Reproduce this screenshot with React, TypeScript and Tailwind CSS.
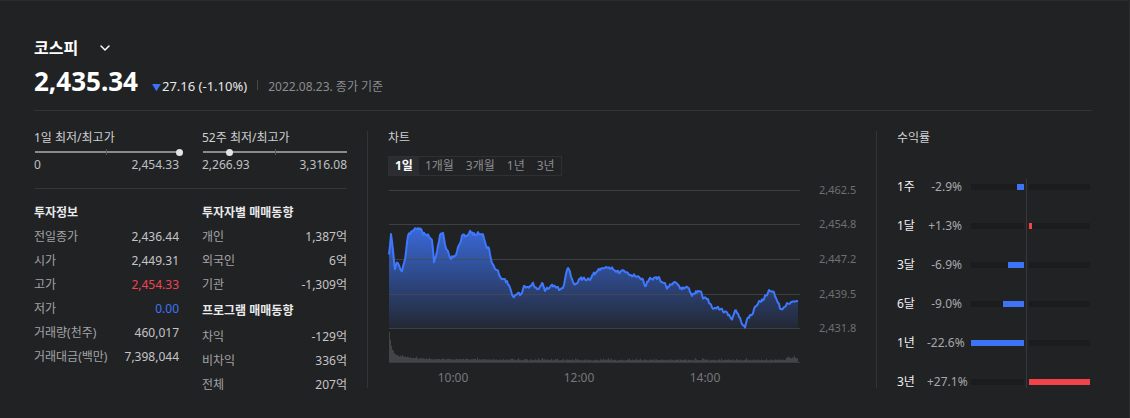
import React from "react";
import { ChevronDown } from "lucide-react";

// page coords traced from the intraday line
const KEYS: [number, number][] = [
  [389, 252], [391, 232], [393, 250], [395, 268], [397, 260], [402, 268], [405, 258], [408, 233], [413, 230],
  [415, 226], [419, 226], [423, 232], [428, 232], [432, 237], [434, 259], [437, 248], [440, 233], [443, 232],
  [445, 243], [450, 255], [455, 255], [458, 247], [462, 235], [467, 233], [470, 230], [475, 232], [478, 231],
  [483, 232], [486, 243], [489, 247], [492, 262], [497, 270], [502, 275], [507, 280], [510, 287], [514, 295],
  [517, 293], [522, 293], [524, 283], [528, 285], [533, 282], [537, 288], [542, 280], [545, 288], [552, 285],
  [557, 285], [560, 288], [564, 283], [567, 270], [569, 267], [572, 278], [574, 282], [578, 278], [583, 277],
  [590, 276], [593, 273], [598, 270], [603, 267], [608, 265], [612, 265], [617, 270], [623, 271], [630, 272],
  [637, 273], [642, 278], [645, 282], [650, 277], [655, 276], [658, 277], [663, 280], [667, 285], [672, 283],
  [677, 283], [682, 287], [687, 285], [692, 293], [697, 290], [700, 288], [703, 295], [707, 297], [712, 305],
  [717, 307], [722, 308], [727, 312], [732, 315], [735, 308], [738, 313], [742, 322], [745, 326], [748, 315],
  [753, 310], [758, 300], [763, 298], [768, 290], [773, 287], [777, 298], [780, 306], [785, 303], [790, 300],
  [798, 299],
];

const OX = 388;
const OY = 180;

function makeRnd(s: number) {
  let seed = s;
  return () => {
    seed = (seed * 9301 + 49297) % 233280;
    return seed / 233280;
  };
}

function buildLine() {
  const rnd = makeRnd(11);
  const pts: [number, number][] = [];
  let i = 0;
  let drift = 0;
  for (let x = 389; x <= 798; x++) {
    while (i < KEYS.length - 2 && KEYS[i + 1][0] < x) i++;
    const [x0, y0] = KEYS[i];
    const [x1, y1] = KEYS[i + 1];
    const t = Math.min(1, Math.max(0, (x - x0) / (x1 - x0)));
    const amp = x > 790 ? 0 : 3.6;
    drift = drift * 0.5 + (rnd() - 0.5) * amp;
    const y = y0 + (y1 - y0) * t + (x > 790 ? 0 : drift);
    pts.push([x - OX, Math.min(146, y - OY)]);
  }
  return pts;
}

function buildVolume() {
  const rnd = makeRnd(5);
  const bars: number[] = [];
  for (let x = 389; x <= 797; x++) {
    const dx = x - 389;
    let h = 1.4 + rnd() * 1.3 + 22 * Math.exp(-dx / 2) + 5 * Math.exp(-dx / 12) + 2 * Math.exp(-dx / 60);
    if (rnd() > 0.93) h += 1.5;
    if (x > 785) h += 2;
    bars.push(Math.min(30, h));
  }
  return bars;
}

const LINE = buildLine();
const VOLUME = buildVolume();
const LINE_D = LINE.map((p, i) => `${i ? "L" : "M"}${p[0]},${p[1].toFixed(1)}`).join(" ");
const AREA_D = `${LINE_D} L${LINE[LINE.length - 1][0]},146 L${LINE[0][0]},146 Z`;

const GRID = [
  { y: 8, label: "2,462.5" },
  { y: 42, label: "2,454.8" },
  { y: 77, label: "2,447.2" },
  { y: 112, label: "2,439.5" },
  { y: 146, label: "2,431.8" },
];

const INFO = [
  { label: "전일종가", value: "2,436.44" },
  { label: "시가", value: "2,449.31" },
  { label: "고가", value: "2,454.33", color: "text-[#f2444f]" },
  { label: "저가", value: "0.00", color: "text-[#3d74f5]" },
  { label: "거래량(천주)", value: "460,017" },
  { label: "거래대금(백만)", value: "7,398,044" },
];

const INVESTORS = [
  { label: "개인", value: "1,387억" },
  { label: "외국인", value: "6억" },
  { label: "기관", value: "-1,309억" },
];

const PROGRAM = [
  { label: "차익", value: "-129억" },
  { label: "비차익", value: "336억" },
  { label: "전체", value: "207억" },
];

const RETURNS = [
  { label: "1주", value: "-2.9%", pct: -2.9 },
  { label: "1달", value: "+1.3%", pct: 1.3 },
  { label: "3달", value: "-6.9%", pct: -6.9 },
  { label: "6달", value: "-9.0%", pct: -9.0 },
  { label: "1년", value: "-22.6%", pct: -22.6 },
  { label: "3년", value: "+27.1%", pct: 27.1 },
];

const TABS = ["1일", "1개월", "3개월", "1년", "3년"];

function Row({ label, value, color }: { label: string; value: string; color?: string }) {
  return (
    <div className="flex h-[24px] items-center justify-between">
      <span className="text-[#a2a3a6]">{label}</span>
      <span className={color ?? "text-[#c4c5c7]"}>{value}</span>
    </div>
  );
}

function RangeBar({ label, low, high, dot, tick }: { label: string; low: string; high: string; dot: number; tick: number }) {
  return (
    <div>
      <div className="leading-[14px] text-[#cfd0d2]">{label}</div>
      <div className="relative mt-[3px] h-[8px]">
        <div className="absolute left-[1px] right-0 top-[3px] h-[2px] bg-[#8a8b8d]" />
        <div className="absolute top-[1px] h-[6px] w-[1px] bg-[#55565a]" style={{ left: tick }} />
        <div className="absolute top-[1px] h-[7px] w-[7px] rounded-full bg-[#e4e4e4]" style={{ left: dot - 3 }} />
      </div>
      <div className="mt-[2px] flex justify-between leading-[14px] text-[#bfc0c2]">
        <span>{low}</span>
        <span>{high}</span>
      </div>
    </div>
  );
}

function PriceChart() {
  return (
    <svg width="468" height="205" className="mt-[6px] block">
      <defs>
        <linearGradient id="fill" gradientUnits="userSpaceOnUse" x1="0" y1="46" x2="0" y2="146">
          <stop offset="0" stopColor="#3b6fe8" stopOpacity="0.92" />
          <stop offset="1" stopColor="#3b6fe8" stopOpacity="0.08" />
        </linearGradient>
      </defs>
      <path d={AREA_D} fill="url(#fill)" />
      {GRID.map((g) => (
        <g key={g.label}>
          <line x1="1" x2="412" y1={g.y + 0.5} y2={g.y + 0.5} stroke="#48494d" strokeOpacity="0.75" strokeWidth="1" />
          <text x="431" y={g.y + 4} fontSize="11" fill="#6e6f72" fontFamily="'Noto Sans', sans-serif">
            {g.label}
          </text>
        </g>
      ))}
      <path d={LINE_D} fill="none" stroke="#3f78ff" strokeWidth="2" strokeLinejoin="round" />
      {VOLUME.map((h, i) => (
        <rect key={i} x={1 + i} y={180 - h} width="1" height={h} fill="#434447" />
      ))}
      <line x1="1" x2="412" y1="180.5" y2="180.5" stroke="#3a3b3e" strokeWidth="1" />
      {[
        { x: 65, t: "10:00" },
        { x: 191, t: "12:00" },
        { x: 317, t: "14:00" },
      ].map((l) => (
        <text key={l.t} x={l.x} y="200" fontSize="12" textAnchor="middle" fill="#77787b" fontFamily="'Noto Sans', sans-serif">
          {l.t}
        </text>
      ))}
    </svg>
  );
}

export default function App() {
  return (
    <div className="h-[418px] w-full overflow-hidden border-r border-t border-[#2b2c2f] bg-[#212224] pl-[34px] pr-[37px] pt-[37px] font-['Noto_Sans','Noto_Sans_CJK_KR',sans-serif] text-[12px]">
      {/* Header */}
      <div className="flex h-[20px] items-center gap-[19px]">
        <span className="text-[16px] font-bold leading-[20px] text-white">코스피</span>
        <ChevronDown size={16} strokeWidth={2.2} className="text-white" />
      </div>
      <div className="mt-[7px] flex items-baseline">
        <span className="text-[26px] font-bold leading-[32px] text-white">2,435.34</span>
        <span className="ml-[14px] text-[9px] text-[#3d74f5]">▼</span>
        <span className="ml-[1px] text-[13px] text-[#e8e8e8]">27.16 (-1.10%)</span>
        <span className="ml-[10px] h-[10px] w-[1px] self-center translate-y-[4px] bg-[#48494c]" />
        <span className="ml-[10px] text-[12px] text-[#8b8c8f]">2022.08.23. 종가 기준</span>
      </div>
      <div className="mt-[13px] border-t border-[#333437]" />

      <div className="mt-[20px] flex h-[257px]">
        {/* Left: ranges and info */}
        <div className="w-[313px]">
          <div className="grid grid-cols-2 gap-[23px]">
            <RangeBar label="1일 최저/최고가" low="0" high="2,454.33" dot={145} tick={72} />
            <RangeBar label="52주 최저/최고가" low="2,266.93" high="3,316.08" dot={27} tick={73} />
          </div>
          <div className="ml-[1px] mt-[16px] border-t border-[#36373a]" />
          <div className="mt-[12px] grid grid-cols-2 gap-[23px]">
            <div>
              <div className="font-bold leading-[24px] text-[#e9e9ea]">투자정보</div>
              {INFO.map((r) => (
                <Row key={r.label} {...r} />
              ))}
            </div>
            <div>
              <div className="font-bold leading-[24px] text-[#e9e9ea]">투자자별 매매동향</div>
              {INVESTORS.map((r) => (
                <Row key={r.label} {...r} />
              ))}
              <div className="font-bold leading-[28px] text-[#e9e9ea]">프로그램 매매동향</div>
              {PROGRAM.map((r) => (
                <Row key={r.label} {...r} />
              ))}
            </div>
          </div>
        </div>

        {/* Chart */}
        <div className="ml-[20px] w-[509px] border-l border-[#333437] pl-[20px]">
          <div className="leading-[14px] text-[#cfd0d2]">차트</div>
          <div className="mt-[11px] flex h-[20px] w-fit border border-[#2f3033]">
            {TABS.map((t, i) => (
              <span
                key={t}
                className={`px-[6px] leading-[18px] ${i === 0 ? "bg-[#2c2d30] font-bold text-white" : "text-[#8b8c8f]"}`}
              >
                {t}
              </span>
            ))}
          </div>
          <PriceChart />
        </div>

        {/* Returns */}
        <div className="w-[215px] border-l border-[#333437] pl-[20px]">
          <div className="leading-[14px] text-[#cfd0d2]">수익률</div>
          <div className="relative mt-[22px]">
            <div className="absolute left-[129px] top-[12px] h-[209px] w-[1px] bg-[#37383b]" />
            {RETURNS.map((r) => (
              <div key={r.label} className="flex h-[39px] items-center">
                <span className="w-[30px] text-[#f0f0f0]">{r.label}</span>
                <span className="w-[35px] text-right text-[#a7a8ab]">{r.value}</span>
                <div className="ml-[9px] flex h-[6px] w-[53px] justify-end bg-[#1b1c1e]">
                  {r.pct < 0 && <div className="h-full bg-[#3d74f5]" style={{ width: Math.round(-r.pct * 2.38) }} />}
                </div>
                <div className="ml-[5px] flex h-[6px] w-[61px] bg-[#1b1c1e]">
                  {r.pct > 0 && <div className="h-full bg-[#f2434b]" style={{ width: Math.max(3, Math.round(r.pct * 2.25)) }} />}
                </div>
              </div>
            ))}
          </div>
        </div>
      </div>
    </div>
  );
}
